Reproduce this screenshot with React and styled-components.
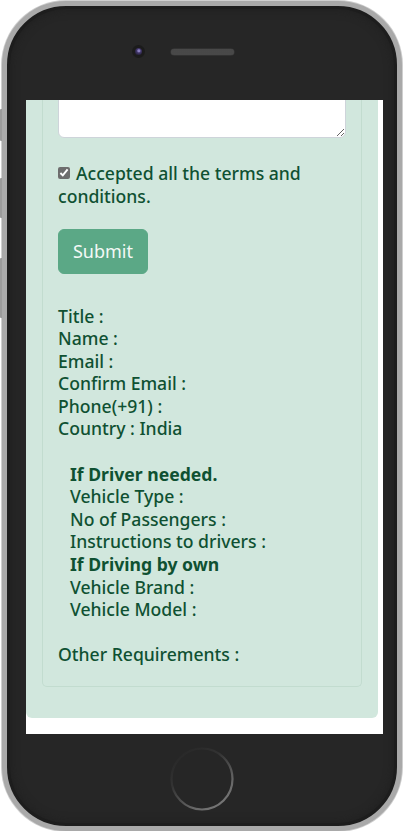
import React from "react";
import styled, { createGlobalStyle } from "styled-components";

const GlobalStyle = createGlobalStyle`
  body {
    margin: 0;
    background: #fff;
    font-family: "Noto Sans", "Open Sans", sans-serif;
  }
  * { box-sizing: border-box; }
`;

const Phone = styled.div`
  position: relative;
  width: 400px;
  height: 830px;
  margin: 1px 0 0 2px;
  border: 5px solid #a9a9a9;
  border-radius: 64px;
  background: #262626;
  box-shadow: 0 0 0 1px #cfcfcf, inset 0 0 0 3px #1d1d1d, inset 0 0 8px 4px #202020;
  display: flex;
  flex-direction: column;
`;

const SideButton = styled.span`
  position: absolute;
  left: -7px;
  top: ${(p) => p.$top}px;
  width: 2px;
  height: ${(p) => p.$h}px;
  background: #9a9a9a;
  border-radius: 1px 0 0 1px;
`;

const TopBar = styled.div`
  height: 94px;
  display: grid;
  grid-template-columns: 1fr auto 1fr;
  align-items: center;
  align-content: start;
  padding-top: 39px;
`;

const Camera = styled.span`
  justify-self: end;
  margin-right: 26px;
  width: 13px;
  height: 13px;
  border-radius: 50%;
  background: #1b1b1b;
  display: flex;
  align-items: center;
  justify-content: center;
  &::after {
    content: "";
    width: 7px;
    height: 7px;
    border-radius: 50%;
    background: radial-gradient(circle at 55% 40%, #8a7fc0 0 1px, #43386d 2px, #2a2440 4px);
  }
`;

const Speaker = styled.span`
  width: 63px;
  height: 6px;
  border-radius: 3px;
  background-color: #2f2f2f;
  background-image: radial-gradient(circle, #565656 0.6px, transparent 0.9px);
  background-size: 2px 2px;
  box-shadow: 0 0 0 0.5px #3c3c3c;
`;

const Screen = styled.div`
  width: 357px;
  height: 634px;
  margin-left: 19px;
  background: #fff;
  overflow: hidden;
  display: flex;
  flex-direction: column;
  justify-content: flex-end;
  padding-bottom: 16px;
`;

const Alert = styled.div`
  flex-shrink: 0;
  width: 352px;
  background: #d1e7dd;
  border-radius: 6px;
  padding: 0 16px 31px;
  color: #0f5132;
`;

const Card = styled.div`
  border: 1px solid #c2dccf;
  border-top: none;
  border-radius: 0 0 5px 5px;
  padding: 0 15px 20px;
`;

const TextArea = styled.textarea`
  display: block;
  width: 100%;
  height: 90px;
  border: 1px solid #ced4da;
  border-radius: 6px;
  background: #fff;
  margin: 0 0 24px;
`;

const Text = styled.div`
  font-size: 17.6px;
  line-height: 22.6px;
  font-weight: ${(p) => (p.$bold ? 700 : 500)};
  padding-left: ${(p) => (p.$indent ? 12 : 0)}px;
  min-height: 22.6px;
`;

const Check = styled.input`
  width: 12px;
  height: 12px;
  margin: 0 6px 0 0;
  accent-color: #6d6d6d;
  vertical-align: 1px;
`;

const SubmitButton = styled.button`
  display: block;
  margin-top: 21px;
  width: 90px;
  height: 45px;
  border: 1px solid #5ba886;
  border-radius: 6px;
  background: #5ba886;
  color: #f4f8f6;
  font-family: inherit;
  font-size: 18px;
  font-weight: 400;
`;

const Details = styled.div`
  margin-top: 31px;
`;

const BottomBar = styled.div`
  flex: 1;
  display: flex;
  justify-content: center;
  padding-top: 13px;
`;

const HomeButton = () => (
  <svg width="64" height="64" viewBox="0 0 64 64">
    <defs>
      <linearGradient id="hb" x1="0.15" y1="0" x2="0.85" y2="1">
        <stop offset="0" stopColor="#262626" />
        <stop offset="0.35" stopColor="#333" />
        <stop offset="0.75" stopColor="#666" />
        <stop offset="1" stopColor="#7c7c7c" />
      </linearGradient>
    </defs>
    <circle cx="32" cy="32" r="30.5" fill="none" stroke="url(#hb)" strokeWidth="2.2" />
  </svg>
);

const summary = [
  { t: "Title :" },
  { t: "Name :" },
  { t: "Email :" },
  { t: "Confirm Email :" },
  { t: "Phone(+91) :" },
  { t: "Country : India" },
  { t: "" },
  { t: "If Driver needed.", bold: true, indent: true },
  { t: "Vehicle Type :", indent: true },
  { t: "No of Passengers :", indent: true },
  { t: "Instructions to drivers :", indent: true },
  { t: "If Driving by own", bold: true, indent: true },
  { t: "Vehicle Brand :", indent: true },
  { t: "Vehicle Model :", indent: true },
  { t: "" },
  { t: "Other Requirements :" },
];

export default function App() {
  return (
    <>
      <GlobalStyle />
      <Phone>
        <SideButton $top={103} $h={32} />
        <SideButton $top={172} $h={40} />
        <SideButton $top={252} $h={60} />
        <TopBar>
          <Camera />
          <Speaker />
          <span />
        </TopBar>
        <Screen>
          <Alert>
            <Card>
              <TextArea />
              <Text>
                <Check type="checkbox" defaultChecked />
                Accepted all the terms and conditions.
              </Text>
              <SubmitButton>Submit</SubmitButton>
              <Details>
                {summary.map((s, i) => (
                  <Text key={i} $bold={s.bold} $indent={s.indent}>
                    {s.t}
                  </Text>
                ))}
              </Details>
            </Card>
          </Alert>
        </Screen>
        <BottomBar>
          <HomeButton />
        </BottomBar>
      </Phone>
    </>
  );
}
